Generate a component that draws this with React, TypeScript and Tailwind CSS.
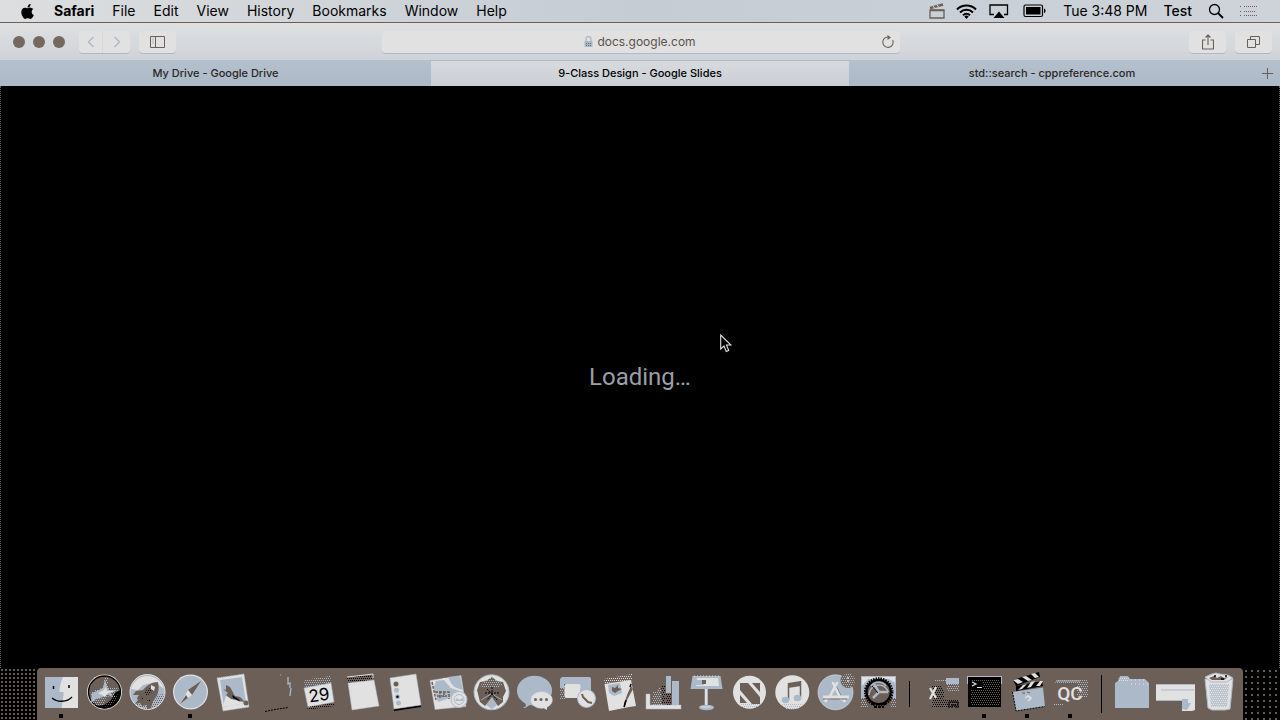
import React from "react";
import { FaApple } from "react-icons/fa";

const L = "#e1e1e1";
const B = "#abb9c8";
const D = "#6c5f57";
const K = "#000000";

const menus = ["File", "Edit", "View", "History", "Bookmarks", "Window", "Help"];

function Patterns() {
  const dots: [string, string][] = [["dotL", L], ["dotB", B], ["dotD", D], ["dotK", K]];
  return (
    <svg width="0" height="0" className="absolute" aria-hidden="true">
      <defs>
        {dots.map(([id, c]) => (
          <pattern key={id} id={id} width="4" height="4" patternUnits="userSpaceOnUse">
            <rect x="0" y="0" width="1" height="1" fill={c} />
            <rect x="2" y="0" width="1" height="1" fill={c} />
            <rect x="1" y="2" width="1" height="1" fill={c} />
            <rect x="3" y="2" width="1" height="1" fill={c} />
          </pattern>
        ))}
      </defs>
    </svg>
  );
}

type App = { name: string; art: React.ReactNode; open?: boolean };

const apps: App[] = [
  {
    name: "Finder",
    open: true,
    art: (
      <>
        <rect x="6" y="9" width="33" height="31" fill={L} />
        <path d="M6 9h18c-2 5-3.500 9-3.500 15h4v3l-2 13H6z" fill={B} />
        <path d="M14.500 18v3M30 17v3" stroke={K} strokeWidth="1.500" />
        <path d="M13 30c5 4.500 15 4.500 20-1" fill="none" stroke={K} strokeWidth="1.300" />
      </>
    ),
  },
  {
    name: "Siri",
    art: (
      <>
        <circle cx="22.500" cy="24" r="17.500" fill={L} />
        <circle cx="22.500" cy="24" r="16" fill={D} stroke={K} strokeWidth="1.300" />
        <path d="M38 22a16 16 0 0 1-24 16l8-1 7-5 4-7z" fill={K} />
        <path d="M22 34l6-1 8-7-1 6-7 6-6 1z" fill="url(#dotD)" />
        <path d="M8 25l5-3 5-1 2-2 2-5 1-6 3 2v7l2 3 7-1 3 3-6 3 2 5-6-2-4 2-3 7-6 1-5-3z" fill="url(#dotB)" />
        <path d="M10 25l7-3 4-2 2-9 2 8 2 3 8 0-6 3 1 4-5-3-4 3-7 2-5 4z" fill={B} />
        <path d="M16 25l6-3 2-3 1 4 8 0-7 2-3 4-3-2z" fill={L} />
      </>
    ),
  },
  {
    name: "Launchpad",
    art: (
      <>
        <circle cx="22.500" cy="24" r="17.500" fill={B} />
        <path d="M6 21a17 17 0 0 1 33 0l-5-4-7-2-9 2-5 5z" fill={L} />
        <path d="M9 35a17 17 0 0 0 31-9l-10 1-8 7z" fill="url(#dotD)" />
        <path d="M33 14c-6 0-11 3-15 8l-7 1-3 4 6 0-2 3 1 2-3 4 5-1 2 3 5-1v6l4-3 2-7c4-4 7-10 5-19z" fill={D} />
        <path d="M19 24l6-4 3 3-6 5zM15 28l4 2-2 3zM22 33l3-3v5z" fill="url(#dotK)" />
        <path d="M26 17l4 2-1 4-3-2z" fill={L} />
        <circle cx="22.500" cy="24" r="17.500" fill="none" stroke={L} strokeWidth="1" />
      </>
    ),
  },
  {
    name: "Safari",
    open: true,
    art: (
      <>
        <circle cx="22.500" cy="24" r="17.500" fill={L} />
        <circle cx="22.500" cy="24" r="16.300" fill={B} />
        <path d="M33 13L20 22l4 5z" fill={D} />
        <path d="M12 36l8-14 4 5z" fill={L} />
        <path d="M12 36l6-9 2 3z" fill={D} />
      </>
    ),
  },
  {
    name: "Mail",
    art: (
      <>
        <path d="M6 10l27-4 5 33-26 4z" fill={L} stroke={B} strokeDasharray="1 1" />
        <path d="M9 12l22-3 4 26-22 4z" fill={B} />
        <path d="M12 37l3-9 9 4 10 3-20 4z" fill={L} />
        <path d="M15 17l4 2 5 9 5 1 5 5-8-2-6-1-5-4 2-2-5-4 3 1z" fill={D} />
        <path d="M21 27l6 4 3 3-8-4z" fill={K} />
        <circle cx="35" cy="35" r="2.500" fill={D} />
      </>
    ),
  },
  {
    name: "Contacts",
    art: (
      <>
        <path d="M11 43.500l10-2 13-2" stroke={K} strokeDasharray="2 1" fill="none" />
        <path d="M34 9v7l2-1v5M37 20l-1 8" stroke={B} strokeWidth="1.300" fill="none" />
        <path d="M26 7h1" stroke={B} />
      </>
    ),
  },
  {
    name: "Calendar",
    art: (
      <>
        <path d="M7 12l26-4 2 8-27 4z" fill="url(#dotB)" />
        <path d="M7 20l27-5 3 19-26 5z" fill={L} stroke={B} strokeWidth="0.500" />
        <path d="M10 39l27-4v3l-26 4z" fill="url(#dotK)" />
        <text x="22" y="33" textAnchor="middle" transform="rotate(-8 22 27)" fontFamily="Inter, sans-serif" fontSize="17" fill={K}>29</text>
      </>
    ),
  },
  {
    name: "Notes",
    art: (
      <>
        <path d="M7 9l26-3v6L8 15z" fill="url(#dotK)" />
        <path d="M7 9l18-2 8-1v4" stroke={L} fill="none" />
        <path d="M8 15l26-3 5 26-27 4z" fill={L} stroke={B} strokeWidth="0.500" />
      </>
    ),
  },
  {
    name: "Reminders",
    art: (
      <>
        <path d="M11 42l27-4" stroke={K} strokeWidth="2" />
        <path d="M7 10l26-4 5 31-27 4z" fill={L} stroke={B} strokeWidth="0.500" />
        <circle cx="13" cy="16" r="2.500" fill={D} />
        <circle cx="13.500" cy="22.300" r="2.500" fill={B} />
        <circle cx="14.500" cy="28.700" r="2.500" fill={B} />
        <circle cx="14.500" cy="28.700" r="1.200" fill={K} />
        <circle cx="15.500" cy="35" r="2.500" fill={B} />
      </>
    ),
  },
  {
    name: "Maps",
    art: (
      <>
        <path d="M4 12.500l31-5 5 31-31 3z" fill={L} stroke={B} strokeWidth="0.500" />
        <path d="M10 13l8-1 4 5 13 5-5 5-9 4-9 3-4-15z" fill={B} />
        <path d="M22 9l12-1 3 14c-8-1-12-5-15-13z" fill={B} />
        <path d="M17 11l4 0 4 8 11 4" stroke={L} strokeWidth="2" fill="none" />
        <path d="M6 14l4 18M9 24h14v7M14 23v7M18 24v5M11 28h10" stroke={D} fill="none" strokeWidth="1.500" strokeDasharray="3 1" />
        <circle cx="33" cy="31.500" r="8" fill={L} stroke={B} />
        <circle cx="33" cy="31.500" r="5" fill="none" stroke={B} />
        <path d="M29 33l2-3 2 2 4-2v3z" fill={B} />
      </>
    ),
  },
  {
    name: "Photos",
    art: (
      <>
        <circle cx="22.500" cy="24.300" r="17.500" fill={L} stroke={B} />
        <path d="M17 13l6-4 5 4 6 1 3 9-3 6 0 5-5 4-6-8-7 8-5-4-3-12 3-8z" fill={D} />
        <path d="M15 13l7-3 7 3 5 3-5 4H15l-4-2z" fill="url(#dotB)" />
        <path d="M23 29l-6 8 6 4 5-4z" fill={B} />
        <path d="M22 26l-10 6M23 26l10 6" stroke={B} strokeWidth="0.800" />
        <path d="M23 19v7l-5 6M23 26l5 6M16 25l14 0M18 21l4 4" stroke={K} strokeDasharray="2 1" fill="none" />
      </>
    ),
  },
  {
    name: "Messages",
    art: (
      <>
        <ellipse cx="22.500" cy="22.700" rx="17.500" ry="15" fill={B} />
        <path d="M13 33l5 4-5 3-2 0 3-2z" fill={B} />
        <ellipse cx="29.500" cy="32" rx="11" ry="8.500" fill={L} stroke={B} strokeWidth="0.500" />
        <path d="M30 39l5-1v4z" fill={L} />
        <circle cx="23.500" cy="31.500" r="1.500" fill={D} />
        <circle cx="29" cy="31.500" r="1.500" fill={D} />
        <circle cx="34.500" cy="31.500" r="1.500" fill={D} />
      </>
    ),
  },
  {
    name: "FaceTime",
    art: (
      <>
        <path d="M5 20V11l2-2h28l1 2v11H22V16H9v4z" fill={B} />
        <path d="M5 18h5v13H5z" fill="url(#dotB)" />
        <rect x="9.500" y="16" width="16" height="14" rx="2" fill={L} />
        <path d="M25 21l7-5v9l-6 4z" fill={B} />
        <circle cx="31.500" cy="30.500" r="9" fill={L} stroke={B} />
        <path d="M27 26l1 3 5 5 4 1" stroke={D} strokeWidth="2" fill="none" />
      </>
    ),
  },
  {
    name: "Pages",
    art: (
      <>
        <path d="M6 11l28-5v7L7 15z" fill="url(#dotL)" />
        <path d="M6.500 16L33 12l5 26-7 1-20 4z" fill={L} />
        <path d="M10 17l12-2 2 10-8 3-5-3z" fill={B} />
        <path d="M14 19l3 1 3-3v3l4 1-4 2-3 2-3-2z" fill={D} />
        <path d="M33 18l2 3-6 11-2 7-1-3 2-7z" fill={D} />
        <path d="M32 13l-6 20" stroke={L} strokeWidth="2" />
        <path d="M28 32l-2 7M33 16l-1 3" stroke={K} strokeWidth="1.500" />
      </>
    ),
  },
  {
    name: "Numbers",
    art: (
      <>
        <path d="M12 24l5-1v-4h5v18H11z" fill="url(#dotB)" />
        <rect x="25" y="8" width="5" height="17" fill={B} />
        <rect x="31" y="13" width="7" height="25" fill={B} />
        <rect x="25" y="25" width="5" height="12" fill="url(#dotK)" />
        <path d="M20 18h4v18h-3z" fill="url(#dotK)" />
        <path d="M5 26h4v11h31v4H5z" fill={L} stroke={B} strokeWidth="0.500" />
      </>
    ),
  },
  {
    name: "Keynote",
    art: (
      <>
        <path d="M8.500 8h28l2 13h-32z" fill={B} />
        <path d="M13 10h21l1 8H12z" fill={L} />
        <path d="M12 12h8v5h-8z" fill={B} />
        <path d="M18 12h4v4h-4z" fill={D} />
        <path d="M22 21v17" stroke={L} strokeWidth="2.500" />
        <path d="M23.500 21v17" stroke={B} />
        <ellipse cx="22.500" cy="39.500" rx="7.500" ry="2.700" fill={B} />
        <path d="M17 39h10" stroke={L} />
        <path d="M10 8h25" stroke={L} strokeDasharray="1 2" />
      </>
    ),
  },
  {
    name: "News",
    art: (
      <>
        <circle cx="22.500" cy="24.300" r="16.500" fill={L} />
        <path d="M13 15h8l12 14v7h-8L13 22z" fill={D} />
        <path d="M25 15h8v9zM13 27v8h7z" fill={D} />
        <path d="M13 36h20l-3 4H17z" fill="url(#dotB)" />
      </>
    ),
  },
  {
    name: "iTunes",
    art: (
      <>
        <circle cx="22.300" cy="24.300" r="17" fill={L} />
        <path d="M11 36h22l-6 6H17z" fill="url(#dotB)" />
        <path d="M18 15l13-2v5l-13 2z" fill={D} />
        <path d="M18.500 15v17M30.500 13v16" stroke={D} strokeWidth="1.500" />
        <ellipse cx="15.500" cy="32" rx="3.800" ry="3.200" fill={B} />
        <ellipse cx="27.500" cy="30" rx="3.800" ry="3.200" fill={B} />
      </>
    ),
  },
  {
    name: "App Store",
    art: (
      <>
        <circle cx="22.500" cy="24.300" r="17.500" fill={B} stroke={L} strokeWidth="0.600" />
        <path d="M23 18l7 14M21 21l-5 8" stroke={D} strokeWidth="1" fill="none" />
        <path d="M20 15l8 16M24 15l-8 15" stroke={L} strokeWidth="2.600" strokeLinecap="round" />
        <path d="M10 29h26M14 30l-2 4M30 31l2 3" stroke={L} strokeWidth="3" />
        <path d="M10 31h24" stroke={D} strokeWidth="0.800" />
        <circle cx="35" cy="12.500" r="7.500" fill={D} />
        <circle cx="35" cy="12.500" r="7" fill="url(#dotB)" />
        <path d="M35 9v6" stroke={L} strokeWidth="1.300" strokeDasharray="2 1" />
      </>
    ),
  },
  {
    name: "System Preferences",
    art: (
      <>
        <rect x="5" y="8" width="35" height="22" fill={B} />
        <path d="M6 9h33v6l-6-4H12l-6 7z" fill={L} />
        <rect x="5" y="30" width="35" height="9" fill="url(#dotB)" />
        <path d="M9 27h28l-3 12H12z" fill={D} />
        <circle cx="22.700" cy="24" r="13.500" fill={D} stroke={K} strokeWidth="2.500" strokeDasharray="1.500 1" />
        <circle cx="22.700" cy="24" r="12" fill="none" stroke={K} strokeWidth="2" />
        <path d="M13 27a10 10 0 0 1 19.500-3M15 18a9.500 9.500 0 0 1 15 0" stroke={B} strokeWidth="1.500" fill="none" />
        <path d="M23 24l-5-8M23 24h9M23 24l-6 6" stroke={B} strokeWidth="2.500" />
        <path d="M22 25l-6-7" stroke={K} strokeWidth="0.800" />
        <path d="M16 36h14M18 39h10" stroke={K} strokeWidth="2" strokeDasharray="3 1" />
      </>
    ),
  },
];

const running: App[] = [
  {
    name: "X11",
    art: (
      <>
        <path d="M15 11h12v3H15z" fill="url(#dotB)" />
        <rect x="27" y="10" width="13" height="6" fill={B} />
        <rect x="28" y="16" width="12" height="8" fill="url(#dotB)" />
        <rect x="13" y="32" width="27" height="8" fill="url(#dotK)" />
        <path d="M30 40v-6h9v6M33 40v-3h4v3" stroke={K} fill="none" />
        <path d="M13 18h9l3 4v7l-4 4h-7z" fill="url(#dotK)" />
        <path d="M18 21l6 1v8l-6 3z" fill="url(#dotK)" />
        <path d="M11 20l6 10M17 19l-6 12" stroke={L} strokeWidth="2.200" />
      </>
    ),
  },
  {
    name: "Terminal",
    open: true,
    art: (
      <>
        <rect x="5" y="8" width="35" height="8" fill={B} />
        <rect x="6" y="9" width="33" height="30" fill={K} />
        <rect x="9" y="12" width="29" height="25" fill="url(#dotD)" />
        <path d="M9 13h12v9H9z" fill={K} />
        <path d="M10 14l4 2-4 2M15 19.500h5" stroke={L} strokeWidth="1.200" fill="none" />
      </>
    ),
  },
  {
    name: "Final Cut",
    open: true,
    art: (
      <>
        <path d="M8 12l26-8 1 5-24 9z" fill={K} />
        <path d="M8 12l5-1 5 3-5 2zM17 9l4-1 6 4-4 1zM26 6l4-1 4 4-4 1z" fill={L} />
        <path d="M11 18l26-5 1 5-27 5z" fill={K} />
        <path d="M13 22l5-5 4-1-5 5zM22 20l4-6 4-1-4 6zM31 18l4-5 3 0-3 5z" fill={L} />
        <path d="M7.500 24L38 19.500l2 19L11 43z" fill={B} />
        <path d="M7.500 24l3.500 19 29-4.500" fill="none" stroke={K} strokeDasharray="2 1" />
        <path d="M17 25h3M22 24l3 1" stroke={D} />
        <path d="M20 30l3-2 3 2-3 3" stroke={L} strokeWidth="1.500" fill="none" />
      </>
    ),
  },
  {
    name: "Quartz Composer",
    open: true,
    art: (
      <>
        <path d="M7 15l3-4h29v5H7z" fill="url(#dotB)" />
        <path d="M29 12h11v17H29z" fill="url(#dotB)" />
        <path d="M5 35h10v2H5z" fill="url(#dotB)" />
        <path d="M8 13h24" stroke={B} />
        <text x="22" y="32" textAnchor="middle" fontFamily="Roboto, sans-serif" fontWeight="500" fontSize="19" fill={L}>QC</text>
      </>
    ),
  },
];

const places: App[] = [
  {
    name: "Documents",
    art: (
      <>
        <path d="M4 15l3-2 2-5h8l2 3h15l4 4v25H4z" fill={B} />
        <path d="M8 9h9l2 5H7z" fill="url(#dotL)" />
        <path d="M20 12h15M20 16h18" stroke={L} strokeDasharray="1 3" />
      </>
    ),
  },
  {
    name: "Downloads",
    art: (
      <>
        <rect x="2" y="16" width="39" height="17" fill={L} />
        <path d="M2 16.500h39M7 22h33M2 32.500h26" stroke={B} />
        <path d="M28 31h13v11l-3 1H28z" fill={L} />
        <path d="M28 31h6v4h3l-4 7-5-1z" fill={B} />
      </>
    ),
  },
  {
    name: "Trash",
    art: (
      <>
        <path d="M8 11h28l-3 30-5 1H15l-4-2z" fill={L} stroke={B} />
        <path d="M12 16h20l-2 23H14z" fill={B} opacity="0.7" />
        <path d="M12 16h20l-2 23H14z" fill="url(#dotL)" />
        <path d="M8 9l7-3 4-1 4 1 8 1 5 3-6 4H14z" fill={L} stroke={B} />
        <path d="M12 10l5-2 3 2 4-2 3 2 4-1-4 3H15z" fill={D} />
        <path d="M17 8h2M24 11h3M28 8h2" stroke={K} strokeWidth="1.500" />
      </>
    ),
  },
];

function DockItems({ items }: { items: App[] }) {
  return (
    <ul className="flex">
      {items.map((a) => (
        <li key={a.name}>
          <button type="button" aria-label={a.name} className="block w-[43px]">
            <svg viewBox="0 0 43 52" className="block w-full">
              {a.art}
              {a.open && <rect x="20" y="46" width="4" height="4" fill={K} />}
            </svg>
          </button>
        </li>
      ))}
    </ul>
  );
}

function MenuBar() {
  return (
    <header className="flex h-[23px] items-center justify-between border-b border-[#6c5f57] bg-linear-to-r from-[#dcdedf] via-[#c5ccd4] to-[#ced3d9] pr-[22px] pl-5 text-[14px] leading-[22px] text-black">
      <nav aria-label="Menu bar" className="flex items-center gap-[18px]">
        <button type="button" aria-label="Apple" className="mr-[2px] flex w-[14px] justify-center">
          <FaApple size={17} className="shrink-0" />
        </button>
        <button type="button" className="font-bold">Safari</button>
        {menus.map((m) => (
          <button key={m} type="button">{m}</button>
        ))}
      </nav>
      <div className="flex items-center">
        <button type="button" aria-label="Recording" className="mr-[11px]">
          <svg width="16" height="16" viewBox="0 0 16 16" fill="none" stroke={D}>
            <path d="M1 7h14v8H1z" strokeWidth="1.300" />
            <path d="M1 5l13-3.500" strokeWidth="2.800" />
            <path d="M1 7.500h14" strokeWidth="1.500" />
            <path d="M4 3l1.500 2M8 2l1.500 2" stroke={L} />
          </svg>
        </button>
        <button type="button" aria-label="Wi-Fi" className="mr-3">
          <svg width="21" height="16" viewBox="0 0 21 16" fill="none" stroke={K} strokeWidth="2">
            <path d="M1 6.500a13.500 13.500 0 0 1 19 0M4 9.500a9.300 9.300 0 0 1 13 0M7 12.300a5 5 0 0 1 7 0" />
            <path d="M10.500 16l-2.200-2.400a3 3 0 0 1 4.400 0z" fill={K} stroke="none" />
          </svg>
        </button>
        <button type="button" aria-label="AirPlay" className="mr-[14px]">
          <svg width="20" height="16" viewBox="0 0 20 16" fill="none" stroke={K} strokeWidth="1.300">
            <path d="M5 11.500H1V2h17.500v9.500H15" />
            <path d="M10 8.500l5.500 6.500h-11z" fill={K} stroke="none" />
          </svg>
        </button>
        <button type="button" aria-label="Battery" className="mr-4">
          <svg width="24" height="14" viewBox="0 0 24 14">
            <rect x="1" y="1" width="18.500" height="11.500" rx="1.500" fill="none" stroke={K} strokeWidth="1.200" />
            <rect x="3" y="3" width="14.500" height="7.500" fill={K} />
            <path d="M21 4.500c2 .5 2 4 0 4.500z" fill={K} />
          </svg>
        </button>
        <button type="button" className="mr-4">Tue 3:48 PM</button>
        <button type="button" className="mr-4 font-medium">Test</button>
        <button type="button" aria-label="Spotlight" className="mr-4">
          <svg width="16" height="16" viewBox="0 0 16 16" fill="none" stroke={K}>
            <circle cx="6.500" cy="6.500" r="5" strokeWidth="1.300" />
            <path d="M10 10l5 5" strokeWidth="1.800" />
          </svg>
        </button>
        <button type="button" aria-label="Notification Center">
          <svg width="18" height="12" viewBox="0 0 18 12" stroke={D} strokeDasharray="1 1">
            <path d="M0 1.500h2M4 1.500h13M0 6.500h2M4 6.500h11M0 10.500h2M4 10.500h13" />
          </svg>
        </button>
      </div>
    </header>
  );
}

function Toolbar() {
  return (
    <div className="flex h-[37px] items-center bg-linear-to-b from-[#dfe0e1] to-[#ced3d9] pt-px pr-2 pl-[13px]">
      <div className="flex flex-1 items-center">
        <div className="flex gap-2">
          {["Close", "Minimize", "Zoom"].map((n) => (
            <button key={n} type="button" aria-label={n} className="size-3 rounded-full bg-[#75695f]" />
          ))}
        </div>
        <div className="ml-[14px] flex h-[23px] rounded-sm border-b border-[#abb9c8] bg-[#e1e1e1]">
          <button type="button" aria-label="Back" className="flex w-6 items-center justify-center border-r border-[#d4d8db]">
            <svg width="8" height="12" viewBox="0 0 8 12" fill="none" stroke={B} strokeWidth="1.300"><path d="M6.500 1l-5 5 5 5" /></svg>
          </button>
          <button type="button" aria-label="Forward" className="flex w-[27px] items-center justify-center">
            <svg width="8" height="12" viewBox="0 0 8 12" fill="none" stroke={B} strokeWidth="1.300"><path d="M1.500 1l5 5-5 5" /></svg>
          </button>
        </div>
        <button type="button" aria-label="Sidebar" className="ml-[9px] flex h-[23px] w-[37px] items-center justify-center rounded-sm border-b border-[#abb9c8] bg-[#e1e1e1]">
          <svg width="15" height="12" viewBox="0 0 15 12" fill="none" stroke={D}><path d="M.5.5h14v11H.5zM5.500.5v11" /><path d="M2 3h2M2 5h2M2 7h2" stroke={B} /></svg>
        </button>
      </div>
      <div className="mr-1 flex h-[23px] w-[518px] items-center rounded-sm border-b border-[#abb9c8] bg-[#e1e1e1] pr-[5px] pl-[18px]">
        <label className="flex flex-1 items-center justify-center gap-1">
          <svg width="9" height="11" viewBox="0 0 9 11"><path d="M2 5V3a2.500 2.500 0 0 1 5 0v2" fill="none" stroke={B} strokeWidth="1.300" /><rect x="0.500" y="5" width="8" height="6" fill={B} /><path d="M2 7.500h5M2 9.500h5" stroke={D} strokeDasharray="1 1" /></svg>
          <input aria-label="Address" defaultValue="docs.google.com" className="field-sizing-content bg-transparent text-[12px] leading-5 text-[#5c514b] outline-none" />
        </label>
        <button type="button" aria-label="Reload">
          <svg width="14" height="14" viewBox="0 0 14 14" fill="none" stroke={D} strokeWidth="1.100"><path d="M11.700 5a5.200 5.200 0 1 1-4.200-3" /><path d="M6.500 0l3.500 2.500-3.500 2.500z" fill={D} stroke="none" /></svg>
        </button>
      </div>
      <div className="flex flex-1 justify-end gap-[9px]">
        <button type="button" aria-label="Share" className="flex h-[23px] w-[37px] items-center justify-center rounded-sm border-b border-[#abb9c8] bg-[#e1e1e1]">
          <svg width="12" height="16" viewBox="0 0 12 16" fill="none" stroke={D} strokeWidth="1.100"><path d="M3.500 6H.5v9h11V6h-3M6 11V1M3.500 3.500L6 1l2.500 2.500" /></svg>
        </button>
        <button type="button" aria-label="Tabs" className="flex h-[23px] w-[37px] items-center justify-center rounded-sm border-b border-[#abb9c8] bg-[#e1e1e1]">
          <svg width="13" height="12" viewBox="0 0 13 12" fill="none" stroke={D}><path d="M.5 3.500h8v8h-8zM3.500 3.500v-3h9v8h-3.500" /></svg>
        </button>
      </div>
    </div>
  );
}

function TabBar() {
  return (
    <nav aria-label="Tabs" className="flex h-[26px] bg-linear-to-b from-[#b5c0cc] to-[#abb9c8] text-[11px] leading-[26px] font-medium text-[#2c2724]">
      <a href="#drive" className="flex-[431] text-center">My Drive - Google Drive</a>
      <a href="#slides" aria-current="page" className="flex-[418] border-t border-[#abb9c8] bg-linear-to-b from-[#d8dadd] to-[#c9cfd6] text-center leading-6 text-black">9-Class Design - Google Slides</a>
      <a href="#reference" className="flex-[406] text-center">std::search - cppreference.com</a>
      <button type="button" aria-label="New tab" className="flex w-[25px] items-center justify-center">
        <svg width="11" height="11" viewBox="0 0 11 11" stroke={D}><path d="M5.500 0v11M0 5.500h11" /></svg>
      </button>
    </nav>
  );
}

export default function App() {
  return (
    <div className="relative flex min-h-screen flex-col overflow-hidden bg-black font-[Inter,sans-serif]">
      <Patterns />
      <MenuBar />
      <Toolbar />
      <TabBar />
      <main className="flex flex-1 items-center justify-center border-x border-dotted border-[#6c5f57]">
        <p className="font-[Roboto,sans-serif] text-[24px] leading-7 text-[#9a9fa5]">Loading…</p>
      </main>
      <footer className="flex">
        <div className="flex-1 bg-[radial-gradient(#6c5f57_0.7px,transparent_0.8px)] bg-size-[4px_4px]" />
        <nav aria-label="Dock" className="flex rounded-t-sm bg-[#6c5f57] pr-[3px] pl-[2px]">
          <DockItems items={apps} />
          <div className="flex w-5 items-start justify-center pt-[13px]"><span className="h-[26px] w-px bg-black" /></div>
          <DockItems items={running} />
          <div className="flex w-5 items-start justify-center pt-[7px]"><span className="h-[38px] w-px bg-black" /></div>
          <DockItems items={places} />
        </nav>
        <div className="flex-1 bg-[radial-gradient(#6c5f57_0.7px,transparent_0.8px)] bg-size-[6px_6px]" />
      </footer>
      <svg width="12" height="19" viewBox="0 0 12 19" className="absolute top-[334px] left-[720px]" aria-hidden="true">
        <path d="M.7 1v14l3.300-3 2.300 5.500 2.400-1L6.500 11h4.500z" fill={K} stroke={L} strokeWidth="1.100" />
      </svg>
    </div>
  );
}
